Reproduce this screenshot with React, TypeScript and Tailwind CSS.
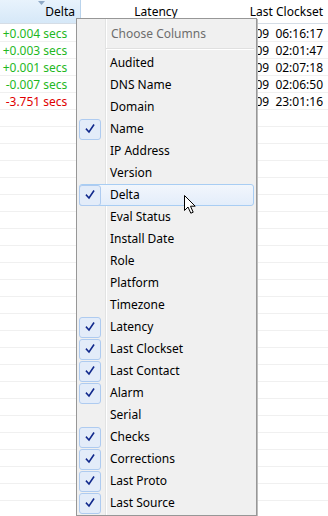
import React from "react";

const rows = [
  { d: "+0.004 secs", c: "text-[#1fb81f]", t: "10/14/2009  06:16:17" },
  { d: "+0.003 secs", c: "text-[#1fb81f]", t: "10/14/2009  02:01:47" },
  { d: "+0.001 secs", c: "text-[#1fb81f]", t: "10/14/2009  02:07:18" },
  { d: "-0.007 secs", c: "text-[#1fb81f]", t: "10/14/2009  02:06:50" },
  { d: "-3.751 secs", c: "text-[#e00000]", t: "10/13/2009  23:01:16" },
];

const items: { label: string; checked: boolean; hot?: boolean }[] = [
  { label: "Audited", checked: false },
  { label: "DNS Name", checked: false },
  { label: "Domain", checked: false },
  { label: "Name", checked: true },
  { label: "IP Address", checked: false },
  { label: "Version", checked: false },
  { label: "Delta", checked: true, hot: true },
  { label: "Eval Status", checked: false },
  { label: "Install Date", checked: false },
  { label: "Role", checked: false },
  { label: "Platform", checked: false },
  { label: "Timezone", checked: false },
  { label: "Latency", checked: true },
  { label: "Last Clockset", checked: true },
  { label: "Last Contact", checked: true },
  { label: "Alarm", checked: true },
  { label: "Serial", checked: false },
  { label: "Checks", checked: true },
  { label: "Corrections", checked: true },
  { label: "Last Proto", checked: true },
  { label: "Last Source", checked: true },
];

function Check() {
  return (
    <svg width="10" height="10" viewBox="0 0 10 10">
      <path d="M1.5 5.2 L4 8 L8.6 1.2" fill="none" stroke="#10288c" strokeWidth="1.6" strokeLinecap="square" />
    </svg>
  );
}

export default function App() {
  const emptyRows = Array.from({ length: 24 });
  return (
    <div className="relative w-[328px] h-[516px] bg-white overflow-hidden text-[12px] text-black" style={{ fontFamily: '"Noto Sans", "Open Sans", sans-serif' }}>
      {/* header */}
      <div className="flex h-[24px] border-b border-[#d5dde6]">
        <div className="relative w-[81px] h-full bg-gradient-to-b from-[#e8f3fc] to-[#d6e8f8] border-r border-[#b9d3ec] flex items-center justify-end pr-[5px]">
          <svg className="absolute left-[38px] top-[1px]" width="7" height="4" viewBox="0 0 7 4">
            <path d="M0 0 L7 0 L3.5 4 Z" fill="#8fa9c6" />
          </svg>
          <span>Delta</span>
        </div>
        <div className="w-[150px] flex items-center justify-center">Latency</div>
        <div className="flex-1 flex items-center justify-end pr-[5px]">Last Clockset</div>
      </div>
      <div className="h-px" />
      {/* rows */}
      {rows.map((r, i) => (
        <div key={i} className="flex h-[17px] border-b border-[#f0f0f0] leading-[17px]">
          <div className={`w-[81px] text-right pr-[5px] ${r.c}`}>{r.d}</div>
          <div className="w-[150px]" />
          <div className="flex-1 text-right pr-[5px] whitespace-pre">{r.t}</div>
        </div>
      ))}
      {emptyRows.map((_, i) => (
        <div key={"e" + i} className="h-[17px] border-b border-[#f0f0f0]" />
      ))}

      {/* context menu */}
      <div className="absolute left-[76px] top-[18px] w-[181px] h-[498px] bg-[#f0f0f0] border border-[#979797] shadow-[1px_1px_0_#bdbdbd]">
        <div className="absolute left-[28px] top-0 bottom-0 w-[2px] border-l border-[#e2e3e3] bg-white" />
        <div className="relative h-[29px] flex items-center pl-[34px] text-[#6d6d6d]">Choose Columns</div>
        <div className="relative ml-[29px] mr-[2px] h-[2px] border-t border-[#e0e0e0] bg-white" />
        <div className="relative pt-[2px] px-[2px]">
          {items.map((it) => (
            <div
              key={it.label}
              className={`flex items-center h-[22px] rounded-[3px] border ${
                it.hot ? "border-[#a8cdf3] bg-gradient-to-b from-[#f2f6fc] to-[#e3edfa]" : "border-transparent"
              }`}
            >
              <div className="w-[22px] h-[22px] -ml-px shrink-0 flex items-center justify-center">
                {it.checked && (
                  <div className="w-[22px] h-[21px] rounded-[3px] border border-[#aecbf0] bg-[#e3ecf9] flex items-center justify-center">
                    <Check />
                  </div>
                )}
              </div>
              <span className="ml-[9px] whitespace-nowrap">{it.label}</span>
            </div>
          ))}
        </div>
      </div>

      {/* mouse cursor */}
      <svg className="absolute left-[184px] top-[195px]" width="13" height="20" viewBox="0 0 13 20">
        <path d="M0.5 0.5 L0.5 15.5 L4 12 L6.8 18.2 L9.2 17.2 L6.5 11.2 L11.2 11.2 Z" fill="#fff" stroke="#000" strokeWidth="1" strokeLinejoin="miter" />
      </svg>
    </div>
  );
}
